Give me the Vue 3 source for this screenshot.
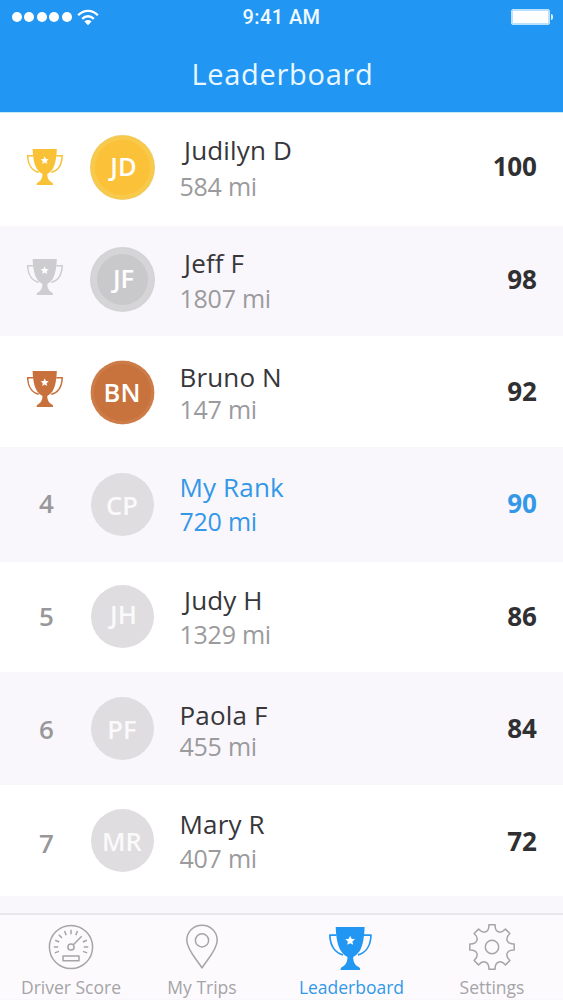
<template>
  <div class="screen">
    <header class="header">
      <div class="status">
        <div class="signal">
          <i v-for="n in 5" :key="n" class="dot"></i>
          <svg class="wifi" viewBox="0 0 22 17">
            <path d="M1.2 6.2C6.6 .4 15.4 .4 20.8 6.2" />
            <path d="M5.2 9.8C8.6 6.4 13.4 6.4 16.8 9.8" />
            <path class="solid" d="M7.4 12.4C9.5 10.4 12.5 10.4 14.6 12.4L11 16.2Z" />
          </svg>
        </div>
        <div class="time">9:41 AM</div>
        <div class="battery"><span class="cell"></span><span class="cap"></span></div>
      </div>
      <h1 class="title">Leaderboard</h1>
    </header>

    <main class="list">
      <div
        v-for="(p, i) in players"
        :key="p.initials"
        class="row"
        :class="{ alt: i % 2, mine: p.mine }"
        :style="{ height: p.height + 'px' }"
      >
        <div class="rank" :style="{ paddingTop: p.rankY + 'px' }">
          <svg v-if="p.medal" class="trophy" :class="p.medal" viewBox="0 0 128 128">
            <path :d="cup" />
            <path class="handle" :d="handles" />
            <path class="star" :d="star" />
          </svg>
          <span v-else>{{ i + 1 }}</span>
        </div>
        <div class="avatar" :class="p.medal" :style="{ marginTop: p.avatarY + 'px' }">
          <span :class="{ nudge: p.initials[0] === 'J' }" :style="{ marginTop: p.initialsY + 'px' }">{{ p.initials }}</span>
        </div>
        <div class="info">
          <div class="name" :class="{ hook: p.name[0] === 'J' }" :style="{ marginTop: p.nameY + 'px' }">{{ p.name }}</div>
          <div class="miles" :style="{ marginTop: p.gap + 'px' }">{{ p.miles }} mi</div>
        </div>
        <div class="score" :style="{ marginTop: p.scoreY + 'px' }">{{ p.score }}</div>
      </div>
    </main>

    <nav class="tabs">
      <div class="tab driver">
        <svg class="icon" viewBox="-23 -23 46 46">
          <circle r="21.6" />
          <circle r="3.1" />
          <path d="M2.3 -2.3L10.7 -10.7" />
          <path v-for="a in ticks" :key="a" d="M0 -17.2V-12.8" :transform="`rotate(${a})`" />
          <rect x="-8" y="9" width="16" height="4.8" />
        </svg>
        <span>Driver Score</span>
      </div>
      <div class="tab trips">
        <svg class="icon" viewBox="-23 -23 46 46">
          <path d="M0 21C-4 14 -15.2 3 -15.2 -6.8C-15.2 -15.5 -8.3 -21.8 0 -21.8S15.2 -15.5 15.2 -6.8C15.2 3 4 14 0 21Z" />
          <circle cy="-6.6" r="6.6" />
        </svg>
        <span>My Trips</span>
      </div>
      <div class="tab board">
        <svg class="icon cup" viewBox="0 0 128 128">
          <path :d="cup" />
          <path class="handle" :d="handles" />
          <path class="star" :d="star" />
        </svg>
        <span>Leaderboard</span>
      </div>
      <div class="tab settings">
        <svg class="icon" viewBox="-23 -23 46 46">
          <path :d="gear" />
          <circle r="6.7" />
        </svg>
        <span>Settings</span>
      </div>
    </nav>
  </div>
</template>

<script setup>
const players = [
  { name: 'Judilyn D', initials: 'JD', miles: 584, score: 100, medal: 'gold', height: 114, rankY: 37, avatarY: 24, initialsY: -2, nameY: 23, gap: 6, scoreY: 36 },
  { name: 'Jeff F', initials: 'JF', miles: 1807, score: 98, medal: 'silver', height: 110, rankY: 33, avatarY: 22, initialsY: -2, nameY: 22, gap: 5, scoreY: 35 },
  { name: 'Bruno N', initials: 'BN', miles: 147, score: 92, medal: 'bronze', height: 111, rankY: 35, avatarY: 25, initialsY: -1, nameY: 26, gap: 2, scoreY: 37 },
  { name: 'My Rank', initials: 'CP', miles: 720, score: 90, mine: true, height: 115, rankY: 38, avatarY: 26, initialsY: 0, nameY: 25, gap: 4, scoreY: 38 },
  { name: 'Judy H', initials: 'JH', miles: 1329, score: 86, height: 110, rankY: 36, avatarY: 23, initialsY: -3, nameY: 23, gap: 4, scoreY: 36 },
  { name: 'Paola F', initials: 'PF', miles: 455, score: 84, height: 113, rankY: 39, avatarY: 25, initialsY: 0, nameY: 28, gap: 1, scoreY: 38 },
  { name: 'Mary R', initials: 'MR', miles: 407, score: 72, height: 111, rankY: 40, avatarY: 24, initialsY: 0, nameY: 24, gap: 4, scoreY: 38 }
]

const cup = 'M20 0H106C105 30 101 55 91 72Q82 84 72 89C72 102 76 112 87 118Q93 119 93 128H34Q34 119 40 118C51 112 55 102 55 89Q44 84 36 72C25 55 21 30 20 0Z'
const handles = 'M22 24H2.5C3 58 20 78 42 83M104 24H125C124 58 108 78 86 83'

const polar = (r, deg) => {
  const a = (deg * Math.PI) / 180
  return `${(r * Math.sin(a)).toFixed(2)} ${(-r * Math.cos(a)).toFixed(2)}`
}

const star = (() => {
  const pts = []
  for (let i = 0; i < 10; i++) {
    const a = (i * Math.PI) / 5
    const r = i % 2 ? 7 : 15
    pts.push(`${(63 + r * Math.sin(a)).toFixed(1)} ${(41 - r * Math.cos(a)).toFixed(1)}`)
  }
  return 'M' + pts.join('L') + 'Z'
})()

// восемь зубцов с мягкими впадинами
const gear = (() => {
  let d = 'M' + polar(22.4, -8)
  for (let a = 0; a < 360; a += 45) {
    d += `L${polar(22.4, a + 8)}C${polar(15, a + 11)} ${polar(15, a + 34)} ${polar(22.4, a + 37)}`
  }
  return d + 'Z'
})()

const ticks = [-110, -90, -67, -45, -22, 0, 22, 67, 90, 110]
</script>

<style>
body { margin: 0; background: #fff; }
</style>

<style scoped>
.screen { width: 563px; height: 1000px; overflow: hidden; display: flex; flex-direction: column; background: #f9f7fb; font-family: "Open Sans", "Noto Sans", sans-serif; }

.header { height: 112px; flex: none; background: #2196f3; color: #fff; }
.status { display: grid; grid-template-columns: 1fr auto 1fr; align-items: center; height: 34px; padding: 0 10px 0 12px; }
.signal { display: flex; align-items: center; gap: 2.4px; }
.dot { width: 10px; height: 10px; border-radius: 50%; background: #fff; }
.wifi { width: 22px; height: 17px; margin-left: 3px; fill: none; stroke: #fff; stroke-width: 2.4; }
.wifi .solid { fill: #fff; stroke: none; }
.time { margin-right: 2px; font: 500 20px/34px Roboto, sans-serif; letter-spacing: 0.4px; color: #f0faff; }
.battery { display: flex; align-items: center; justify-content: flex-end; }
.cell { width: 37px; height: 14px; border: 1px solid #b9e2ff; border-radius: 2px; background: #fff; box-shadow: inset 0 0 0 0.5px #79c2f9; }
.cap { width: 2px; height: 6px; margin-left: 1px; border-radius: 0 2px 2px 0; background: #d5eeff; }
.title { margin: 20px 0 0; padding-left: 2px; text-align: center; font-size: 29px; font-weight: 400; line-height: 40px; letter-spacing: 0.7px; color: #e9f8ff; }

.list { flex: none; }
.row { display: flex; align-items: flex-start; background: #fff; }
.row:first-child { box-shadow: inset 0 1px #c5e8ff; }
.row.alt { background: #f9f7fb; }
.rank { width: 36px; margin-left: 27px; text-align: center; font-size: 26px; line-height: 36px; font-weight: 600; color: #98979a; box-sizing: border-box; }
.rank span { display: block; margin-left: 3px; }
.trophy { display: block; width: 36px; height: 36px; fill: currentColor; }
.handle { fill: none; stroke: currentColor; stroke-width: 5.5; }
.star { fill: #fff; }
.trophy.gold { color: #f9c136; }
.trophy.silver { color: #cdcdd0; }
.trophy.bronze { color: #c9713c; }

.avatar { display: flex; align-items: flex-start; justify-content: center; width: 63px; height: 63px; margin: 0 0.5px 0 27.5px; border-radius: 50%; background: #dfdde0; color: #fafafa; font-size: 25.5px; font-weight: 600; line-height: 64px; }
.avatar .nudge { padding-left: 3px; }
.avatar.gold { background: #fbc138; box-shadow: inset 0 0 0 4px #f8ca4b, 0 0 0 1px #f0cc6c; color: #fff; }
.avatar.silver { background: #c9c9cb; box-shadow: inset 0 0 0 6px #d5d5d7, 0 0 0 1px #d5d5d7; color: #fff; }
.avatar.bronze { background: #c8723d; box-shadow: inset 0 0 0 3px #cd7c48, 0 0 0 0.5px #dba682; color: #fff; }

.info { flex: 1; margin-left: 25.5px; line-height: 30px; }
.name { font-size: 26px; letter-spacing: 0.15px; color: #37363a; }
.name.hook { padding-left: 4.5px; }
.miles { font-size: 25px; letter-spacing: -0.25px; color: #9b9a9d; }
.score { margin-right: 26.5px; font-size: 26px; line-height: 36px; font-weight: 700; letter-spacing: -0.3px; color: #302f32; }
.mine .name, .mine .miles, .mine .score { color: #3398e8; }

.tabs { flex: none; height: 86px; margin-top: 17px; border-top: 2px solid #e9e7ea; background: #fcfafd; display: flex; box-sizing: border-box; color: #a5a4a7; }
.tab { display: flex; flex-direction: column; align-items: center; padding-top: 9px; font-size: 17.5px; line-height: 24px; white-space: nowrap; }
.tab span { margin-top: 5px; }
.driver { width: 142px; }
.trips { width: 120px; }
.board { width: 179px; color: #3398e8; }
.settings { width: 102px; }
.icon { flex: none; width: 46px; height: 46px; fill: none; stroke: #a5a4a7; stroke-width: 1.5; stroke-linejoin: round; }
.icon.cup { width: 43px; height: 43px; margin: 3px 3px 0 0; fill: #2196f3; stroke: none; }
.cup .handle { fill: none; stroke: #2196f3; stroke-width: 5; }
.cup .star { fill: #fff; }
</style>
